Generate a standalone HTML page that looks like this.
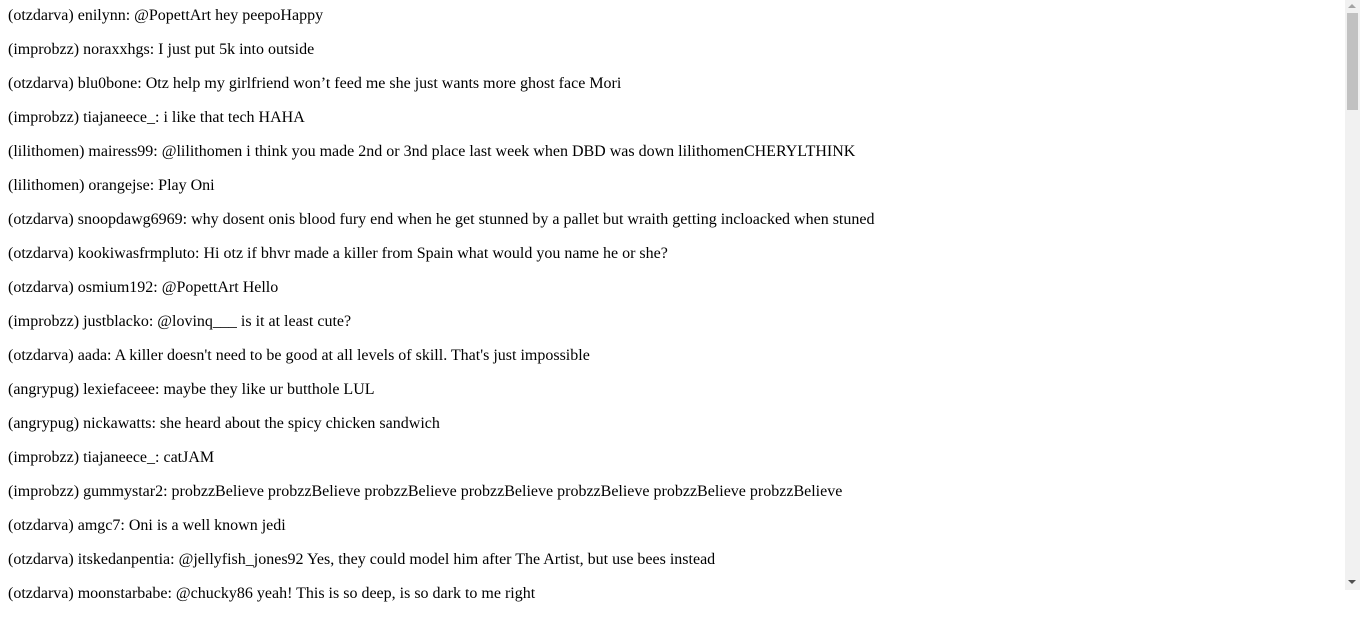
<!DOCTYPE html>
<html><head><meta charset="utf-8"><style>
html,body{margin:0;padding:0;background:#fff;overflow:hidden;width:1360px;height:590px}
body{font-family:"Liberation Serif",serif;font-size:16px;color:#000}
.c{position:absolute;left:8px;top:7px}
p{margin:0 0 16px;line-height:18px;white-space:nowrap}
.sb{position:absolute;left:1345px;top:0;width:15px;height:590px;background:#f1f1f1}
.th{position:absolute;left:2px;top:13px;width:11px;height:97px;background:#c1c1c1}
.up{position:absolute;left:3px;top:4px;width:0;height:0;border-left:4px solid transparent;border-right:4px solid transparent;border-bottom:4px solid #a3a3a3}
.dn{position:absolute;left:3px;top:580px;width:0;height:0;border-left:4px solid transparent;border-right:4px solid transparent;border-top:4px solid #505050}
</style></head><body>
<div class="c">
<p>(otzdarva) enilynn: @PopettArt hey peepoHappy</p>
<p>(improbzz) noraxxhgs: I just put 5k into outside</p>
<p>(otzdarva) blu0bone: Otz help my girlfriend won’t feed me she just wants more ghost face Mori</p>
<p>(improbzz) tiajaneece_: i like that tech HAHA</p>
<p>(lilithomen) mairess99: @lilithomen i think you made 2nd or 3nd place last week when DBD was down lilithomenCHERYLTHINK</p>
<p>(lilithomen) orangejse: Play Oni</p>
<p>(otzdarva) snoopdawg6969: why dosent onis blood fury end when he get stunned by a pallet but wraith getting incloacked when stuned</p>
<p>(otzdarva) kookiwasfrmpluto: Hi otz if bhvr made a killer from Spain what would you name he or she?</p>
<p>(otzdarva) osmium192: @PopettArt Hello</p>
<p>(improbzz) justblacko: @lovinq___ is it at least cute?</p>
<p>(otzdarva) aada: A killer doesn't need to be good at all levels of skill. That's just impossible</p>
<p>(angrypug) lexiefaceee: maybe they like ur butthole LUL</p>
<p>(angrypug) nickawatts: she heard about the spicy chicken sandwich</p>
<p>(improbzz) tiajaneece_: catJAM</p>
<p>(improbzz) gummystar2: probzzBelieve probzzBelieve probzzBelieve probzzBelieve probzzBelieve probzzBelieve probzzBelieve</p>
<p>(otzdarva) amgc7: Oni is a well known jedi</p>
<p>(otzdarva) itskedanpentia: @jellyfish_jones92 Yes, they could model him after The Artist, but use bees instead</p>
<p>(otzdarva) moonstarbabe: @chucky86 yeah! This is so deep, is so dark to me right</p>
</div>
<div class="sb"><div class="up"></div><div class="th"></div><div class="dn"></div></div>
</body></html>
